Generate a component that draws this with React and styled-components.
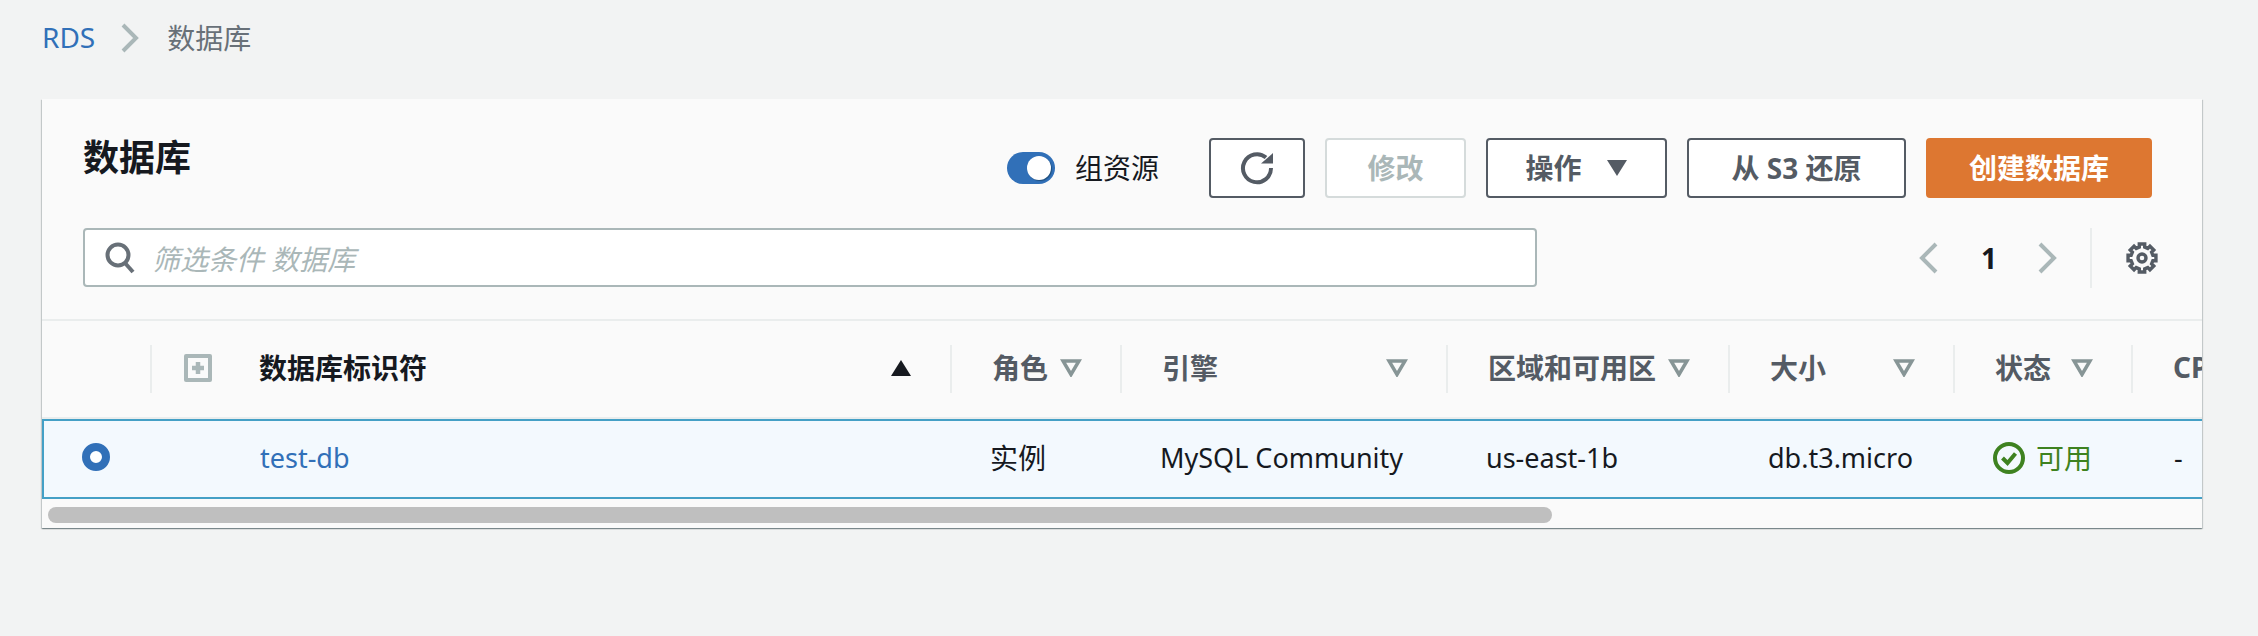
import styled, { createGlobalStyle } from 'styled-components';

const COLUMNS = '108px 800px 170px 326px 282px 225px 178px 300px';
const FONT = '"Noto Sans", "Noto Sans CJK SC", sans-serif';

const GlobalStyle = createGlobalStyle`
  html, body {
    margin: 0;
    padding: 0;
    background: #f2f3f3;
  }
  body {
    font-family: ${FONT};
    color: #16191f;
  }
  * {
    box-sizing: border-box;
  }
`;

const Page = styled.div`
  padding: 0 56px 109px 42px;
`;

const Breadcrumbs = styled.nav`
  display: flex;
  align-items: center;
  height: 74px;
  font-size: 28px;
  color: #687078;
`;

const CrumbLink = styled.a`
  color: #3170b8;
`;

const CrumbSeparator = styled.svg`
  width: 20px;
  height: 30px;
  margin: 2px 26px 0 26px;
  fill: none;
  stroke: #aab7b8;
  stroke-width: 4;
`;

const Panel = styled.section`
  margin-top: 25px;
  background: #fafafa;
  box-shadow: 0 1px 1px 0 rgba(0, 28, 36, 0.3), 1px 1px 1px 0 rgba(0, 28, 36, 0.15), -1px 1px 1px 0 rgba(0, 28, 36, 0.15);
`;

const PanelHead = styled.header`
  padding: 39px 50px 31px 41px;
  border-bottom: 2px solid #eaeded;
`;

const TitleRow = styled.div`
  display: flex;
  justify-content: space-between;
  align-items: flex-start;
`;

const Title = styled.h1`
  margin: -5px 0 0;
  font-size: 36px;
  line-height: 50px;
  font-weight: 700;
`;

const Actions = styled.div`
  display: flex;
  align-items: center;
  gap: 20px;
`;

const GroupToggle = styled.label`
  display: flex;
  align-items: center;
  gap: 20px;
  margin-right: 30px;
  padding-bottom: 2px;
  font-size: 28px;
`;

const ToggleTrack = styled.span`
  display: flex;
  justify-content: flex-end;
  align-items: center;
  width: 48px;
  height: 32px;
  margin-top: 2px;
  padding: 4px;
  border-radius: 16px;
  background: #3170b8;
`;

const ToggleKnob = styled.span`
  width: 24px;
  height: 24px;
  border-radius: 50%;
  background: #fff;
  box-shadow: 1px 1px 1px rgba(0, 28, 36, 0.4);
`;

const Button = styled.button`
  display: flex;
  align-items: center;
  justify-content: center;
  width: ${({ $width }) => $width}px;
  height: 60px;
  padding: 0 0 2px;
  border: 2px solid ${({ disabled }) => (disabled ? '#d5dbdb' : '#545b64')};
  border-radius: 4px;
  background: #fff;
  color: ${({ disabled }) => (disabled ? '#aab7b8' : '#545b64')};
  font-family: ${FONT};
  font-size: 28px;
  font-weight: 700;
  white-space: nowrap;
`;

const PrimaryButton = styled(Button)`
  border-color: #dd7731;
  background: #dd7731;
  color: #fff;
`;

const Caret = styled.svg`
  width: 22px;
  height: 18px;
  margin: 2px 0 0 24px;
  fill: #545b64;
`;

const ToolIcon = styled.svg`
  display: block;
  width: 36px;
  height: 36px;
  margin-top: 2px;
  fill: none;
  stroke: #545b64;
  stroke-width: 4;
`;

const FilterRow = styled.div`
  display: flex;
  justify-content: space-between;
  margin-top: 30px;
`;

const SearchBox = styled.div`
  display: flex;
  align-items: center;
  gap: 16px;
  width: 1454px;
  height: 59px;
  padding: 0 19px;
  border: 2px solid #aab7b8;
  border-radius: 4px;
  background: #fff;
`;

const SearchIcon = styled.svg`
  width: 32px;
  height: 32px;
  fill: none;
  stroke: #687078;
  stroke-width: 4;
`;

const Placeholder = styled.span`
  font-size: 28px;
  font-style: italic;
  color: #aab7b8;
`;

const Pager = styled.div`
  display: flex;
  align-items: center;
  height: 60px;
`;

const PageArrow = styled.svg`
  width: 20px;
  height: 32px;
  fill: none;
  stroke: #aab7b8;
  stroke-width: 4;
`;

const PageNumber = styled.span`
  width: 100px;
  padding-left: 2px;
  text-align: center;
  font-size: 28px;
  font-weight: 700;
`;

const PagerDivider = styled.span`
  align-self: stretch;
  width: 2px;
  margin: 0 34px 0 32px;
  background: #eaeded;
`;

const GearIcon = styled.svg`
  display: block;
  width: 32px;
  height: 32px;
  margin-right: -6px;
  fill: none;
  stroke: #545b64;
  stroke-width: 3.4;
`;

const TableClip = styled.div`
  overflow: hidden;
`;

const HeadRow = styled.div`
  display: grid;
  grid-template-columns: ${COLUMNS};
  width: 2390px;
  height: 98px;
  padding: 24px 0 26px;
  box-shadow: inset 0 -2px 0 #eaeded;
`;

const HeadCell = styled.div`
  display: flex;
  align-items: center;
  justify-content: space-between;
  padding: 0 38px 5px 40px;
  border-left: 2px solid #eaeded;
  font-size: 28px;
  font-weight: 700;
  color: #545b64;
  white-space: nowrap;
`;

const EmptyHead = styled.div``;

const NameHead = styled(HeadCell)`
  padding-left: 32px;
  color: #16191f;
`;

const NameLabel = styled.span`
  flex: 1;
  margin-left: 47px;
`;

const ExpandIcon = styled.svg`
  width: 28px;
  height: 28px;
  margin-top: 2px;
`;

const SortIcon = styled.svg`
  width: 22px;
  height: 18px;
  margin-top: 2px;
  fill: ${({ $active }) => ($active ? '#16191f' : 'none')};
  stroke: ${({ $active }) => ($active ? 'none' : '#879596')};
  stroke-width: 3.5;
`;

const BodyRow = styled.div`
  display: grid;
  grid-template-columns: ${COLUMNS};
  width: 2390px;
  height: 80px;
  border: 2px solid #44a0c6;
  border-right: 0;
  background: #f3f9fe;
`;

const BodyCell = styled.div`
  display: flex;
  align-items: center;
  padding-left: ${({ $inset }) => $inset || 38}px;
  padding-bottom: ${({ $latin }) => ($latin ? 3 : 5)}px;
  font-size: ${({ $latin }) => ($latin ? 27 : 28)}px;
  white-space: nowrap;
`;

const Radio = styled.span`
  width: 28px;
  height: 28px;
  margin-top: 1px;
  border: 8px solid #3170b8;
  border-radius: 50%;
  background: #fff;
`;

const DbLink = styled.a`
  color: #3170b8;
`;

const StatusText = styled.span`
  display: flex;
  align-items: center;
  gap: 11px;
  font-size: 28px;
  color: #3e8220;
`;

const StatusIcon = styled.svg`
  width: 32px;
  height: 32px;
  margin-top: 2px;
  fill: none;
  stroke: #3e8220;
  stroke-width: 4;
`;

const ScrollTrack = styled.div`
  padding: 8px 6px 5px;
`;

const ScrollThumb = styled.div`
  height: 16px;
  border-radius: 8px;
  background: #bfbfbf;
`;

const filterArrow = (
  <SortIcon viewBox="0 0 22 18">
    <path d="M3 2h16l-8 13.5z" />
  </SortIcon>
);

const headers = [
  { title: '角色', filter: true },
  { title: '引擎', filter: true },
  { title: '区域和可用区', filter: true },
  { title: '大小', filter: true },
  { title: '状态', filter: true },
  { title: 'CPU', filter: false },
];

// eight square teeth round the centre of a 32px box
const gearOutline = () => {
  const point = (radius, deg) => {
    const rad = (deg * Math.PI) / 180;
    return `${(16 + radius * Math.cos(rad)).toFixed(2)} ${(16 + radius * Math.sin(rad)).toFixed(2)}`;
  };
  const parts = [];
  for (let i = 0; i < 8; i++) {
    const deg = i * 45;
    parts.push(point(11.2, deg - 14), point(14.2, deg - 11), point(14.2, deg + 11), point(11.2, deg + 14));
  }
  return `M${parts.join('L')}z`;
};

const App = () => (
  <Page>
    <GlobalStyle />
    <Breadcrumbs>
      <CrumbLink>RDS</CrumbLink>
      <CrumbSeparator viewBox="0 0 20 30">
        <path d="M2 2l13 13L2 28" />
      </CrumbSeparator>
      <span>数据库</span>
    </Breadcrumbs>

    <Panel>
      <PanelHead>
        <TitleRow>
          <Title>数据库</Title>
          <Actions>
            <GroupToggle>
              <ToggleTrack>
                <ToggleKnob />
              </ToggleTrack>
              组资源
            </GroupToggle>
            <Button $width={96}>
              <ToolIcon viewBox="0 0 36 36">
                <path d="M27 7.5A14 14 0 1 0 32 18" />
                <path d="M34 3v10.5H22z" fill="#545b64" stroke="none" />
              </ToolIcon>
            </Button>
            <Button $width={141} disabled>修改</Button>
            <Button $width={181}>
              操作
              <Caret viewBox="0 0 22 18">
                <path d="M1 1h20L11 17z" />
              </Caret>
            </Button>
            <Button $width={219}>从 S3 还原</Button>
            <PrimaryButton $width={226}>创建数据库</PrimaryButton>
          </Actions>
        </TitleRow>
        <FilterRow>
          <SearchBox>
            <SearchIcon viewBox="0 0 32 32">
              <circle cx="14" cy="13" r="10.5" />
              <path d="M21 21l8 9" />
            </SearchIcon>
            <Placeholder>筛选条件 数据库</Placeholder>
          </SearchBox>
          <Pager>
            <PageArrow viewBox="0 0 20 32">
              <path d="M18 2L4 16l14 14" />
            </PageArrow>
            <PageNumber>1</PageNumber>
            <PageArrow viewBox="0 0 20 32">
              <path d="M2 2l14 14L2 30" />
            </PageArrow>
            <PagerDivider />
            <GearIcon viewBox="0 0 32 32">
              <path d={gearOutline()} />
              <circle cx="16" cy="16" r="4" />
            </GearIcon>
          </Pager>
        </FilterRow>
      </PanelHead>

      <TableClip>
        <HeadRow>
          <EmptyHead />
          <NameHead>
            <ExpandIcon viewBox="0 0 28 28">
              <rect width="28" height="28" rx="2" fill="#aab7b8" />
              <rect x="4" y="4" width="20" height="20" fill="#fafafa" />
              <path d="M14 8v12M8 14h12" stroke="#aab7b8" strokeWidth="4.5" />
            </ExpandIcon>
            <NameLabel>数据库标识符</NameLabel>
            <SortIcon $active viewBox="0 0 22 18">
              <path d="M11 1l10 16H1z" />
            </SortIcon>
          </NameHead>
          {headers.map((h) => (
            <HeadCell key={h.title}>
              {h.title}
              {h.filter && filterArrow}
            </HeadCell>
          ))}
        </HeadRow>
        <BodyRow>
          <BodyCell>
            <Radio />
          </BodyCell>
          <BodyCell $inset={108} $latin>
            <DbLink>test-db</DbLink>
          </BodyCell>
          <BodyCell>实例</BodyCell>
          <BodyCell $latin>MySQL Community</BodyCell>
          <BodyCell $latin>us-east-1b</BodyCell>
          <BodyCell $latin>db.t3.micro</BodyCell>
          <BodyCell>
            <StatusText>
              <StatusIcon viewBox="0 0 32 32">
                <circle cx="16" cy="16" r="14" />
                <path d="M9.5 16l5 5 8-9.5" />
              </StatusIcon>
              可用
            </StatusText>
          </BodyCell>
          <BodyCell $inset={41} $latin>-</BodyCell>
        </BodyRow>
      </TableClip>
      <ScrollTrack>
        <ScrollThumb style={{ width: `${(1504 / 2148) * 100}%` }} />
      </ScrollTrack>
    </Panel>
  </Page>
);

export default App;
